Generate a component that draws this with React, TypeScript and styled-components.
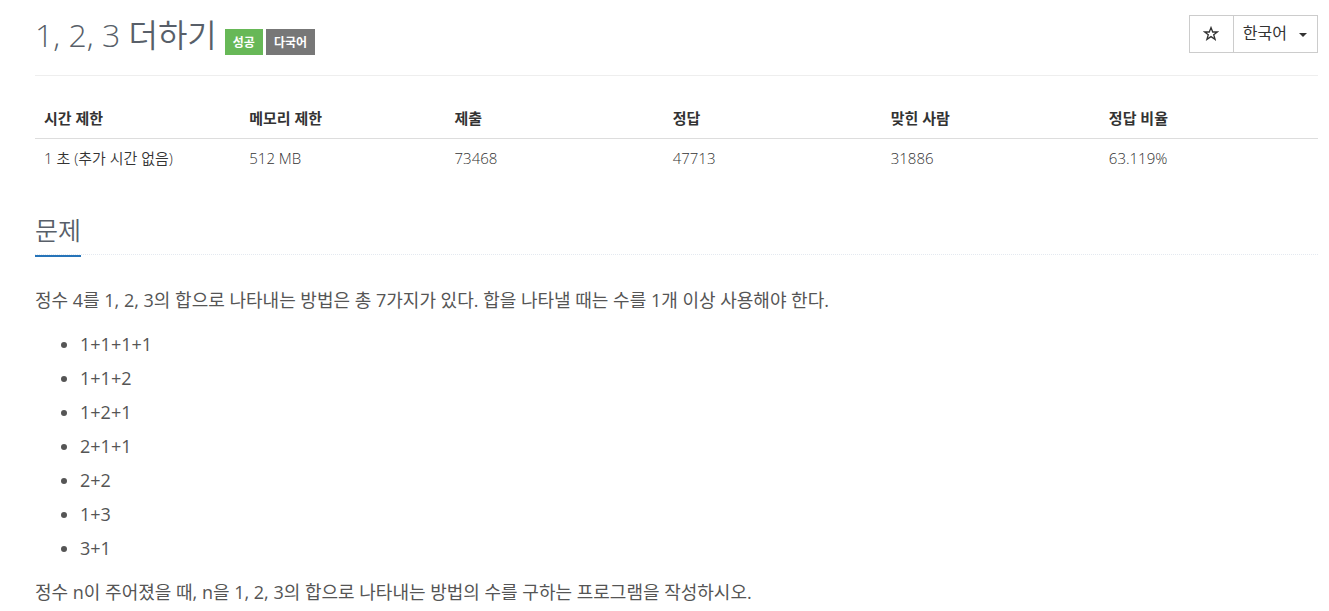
import React from "react";
import styled, { createGlobalStyle } from "styled-components";

const GlobalStyle = createGlobalStyle`
  *, *::before, *::after { box-sizing: border-box; }
  body {
    margin: 0;
    background: #fff;
    color: #333;
    font-family: "Open Sans", "Noto Sans CJK KR", sans-serif;
    font-size: 15px;
    line-height: 22px;
  }
`;

const Page = styled.main`
  padding: 15px 11px 0 35px;
`;

const Header = styled.header`
  display: flex;
  justify-content: space-between;
  align-items: flex-start;
  height: 61px;
  border-bottom: 1px solid #eee;
`;

const TitleGroup = styled.div`
  display: flex;
  align-items: flex-end;
  gap: 8px;
  height: 40px;
`;

const Title = styled.h1`
  margin: 0;
  color: #585f69;
  font-size: 32px;
  font-weight: 350;
  line-height: 40px;
`;

const Labels = styled.div`
  display: flex;
  gap: 3px;
`;

const Label = styled.span<{ $color: string }>`
  padding: 1px 8px 0;
  background: ${({ $color }) => $color};
  color: #fff;
  font-size: 12px;
  font-weight: 700;
  line-height: 25px;
`;

const ButtonGroup = styled.div`
  display: flex;
  height: 38px;
  border: 1px solid #ccc;
`;

const Button = styled.button`
  display: flex;
  align-items: center;
  gap: 12px;
  padding: 0 10px 2px 9px;
  border: 0;
  background: #fff;
  color: #333;
  font: inherit;
  font-size: 16px;
  cursor: pointer;

  & + & {
    border-left: 1px solid #ccc;
  }
`;

const StarButton = styled(Button)`
  padding: 0 14px 0 13px;
`;

const Caret = styled.span`
  margin-top: 4px;
  border: 4px solid transparent;
  border-top-color: #333;
  border-bottom: 0;
`;

const InfoTable = styled.table`
  width: 100%;
  margin: 22px 0 0;
  border-collapse: collapse;
  table-layout: fixed;
`;

const HeadCell = styled.th<{ $width: number }>`
  width: ${({ $width }) => $width}%;
  padding: 9px;
  border-bottom: 1px solid #ddd;
  font-weight: 700;
  text-align: left;
`;

const Cell = styled.td`
  padding: 8px 9px 10px;
  font-weight: 350;
`;

const SectionHead = styled.div`
  margin: 34px 0 28px;
  border-bottom: 1px dotted #e4e9f0;
`;

const SectionTitle = styled.h2`
  display: inline-block;
  margin: 0 0 -3px;
  padding-bottom: 8px;
  border-bottom: 2px solid #2674b9;
  color: #585f69;
  font-size: 25px;
  font-weight: 350;
  line-height: 34px;
  vertical-align: bottom;
`;

const Paragraph = styled.p`
  margin: 0 0 10px;
  color: #555;
  font-size: 18px;
  line-height: 34px;
`;

const Examples = styled.ul`
  margin: 0 0 10px;
  padding-left: 45px;
  color: #555;
  font-size: 18px;
  line-height: 34px;
`;

const columns = [
  { name: "시간 제한", value: "1 초 (추가 시간 없음)", width: 16 },
  { name: "메모리 제한", value: "512 MB", width: 16 },
  { name: "제출", value: "73468", width: 17 },
  { name: "정답", value: "47713", width: 17 },
  { name: "맞힌 사람", value: "31886", width: 17 },
  { name: "정답 비율", value: "63.119%", width: 17 },
];

const sums = ["1+1+1+1", "1+1+2", "1+2+1", "2+1+1", "2+2", "1+3", "3+1"];

export default function App() {
  return (
    <>
      <GlobalStyle />
      <Page lang="ko">
        <Header>
          <TitleGroup>
            <Title>1, 2, 3 더하기</Title>
            <Labels>
              <Label $color="#67b857">성공</Label>
              <Label $color="#777">다국어</Label>
            </Labels>
          </TitleGroup>
          <ButtonGroup>
            <StarButton type="button" aria-label="즐겨찾기">
              <svg width="16" height="16" viewBox="0 0 16 16" fill="none" stroke="#333" strokeWidth="1.3" aria-hidden="true">
                <path d="M8 1.6 9.7 6H14.4L10.7 8.8 12.1 13.4 8 10.6 3.9 13.4 5.3 8.8 1.6 6H6.3Z" />
              </svg>
            </StarButton>
            <Button type="button" aria-haspopup="menu">
              한국어
              <Caret />
            </Button>
          </ButtonGroup>
        </Header>

        <InfoTable>
          <thead>
            <tr>
              {columns.map((c) => (
                <HeadCell key={c.name} $width={c.width} scope="col">{c.name}</HeadCell>
              ))}
            </tr>
          </thead>
          <tbody>
            <tr>
              {columns.map((c) => (
                <Cell key={c.name}>{c.value}</Cell>
              ))}
            </tr>
          </tbody>
        </InfoTable>

        <section>
          <SectionHead>
            <SectionTitle>문제</SectionTitle>
          </SectionHead>
          <Paragraph>
            정수 4를 1, 2, 3의 합으로 나타내는 방법은 총 7가지가 있다. 합을 나타낼 때는 수를 1개 이상 사용해야 한다.
          </Paragraph>
          <Examples>
            {sums.map((s) => (
              <li key={s}>{s}</li>
            ))}
          </Examples>
          <Paragraph>
            정수 n이 주어졌을 때, n을 1, 2, 3의 합으로 나타내는 방법의 수를 구하는 프로그램을 작성하시오.
          </Paragraph>
        </section>
      </Page>
    </>
  );
}
